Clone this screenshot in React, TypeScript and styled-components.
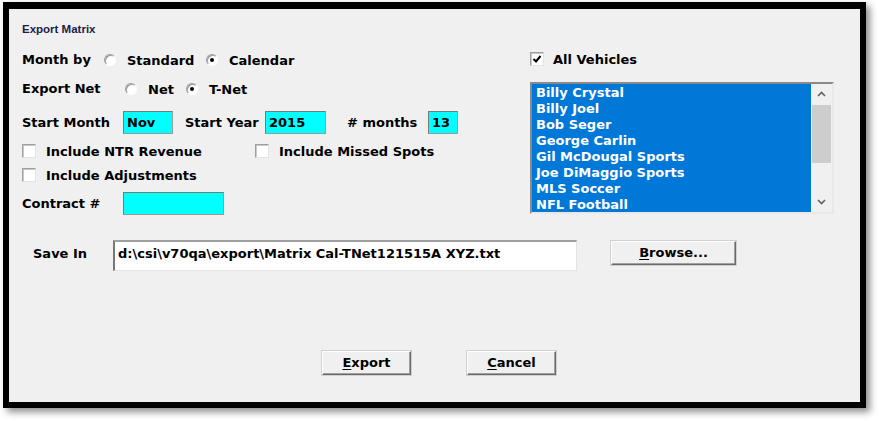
import React from "react";
import styled, { createGlobalStyle } from "styled-components";

const GlobalStyle = createGlobalStyle`
  html, body { margin: 0; padding: 0; background: #ffffff; }
  body { font-family: "DejaVu Sans", "Liberation Sans", sans-serif; }
  * { box-sizing: border-box; }
`;

const Page = styled.div`
  width: 879px;
  height: 421px;
  padding: 2px 0 0 3px;
  background: #ffffff;
`;

const Dialog = styled.div`
  width: 863px;
  height: 406px;
  border-style: solid;
  border-color: #000;
  border-width: 7px 6px 6px 6px;
  background: #f0f0f0;
  box-shadow: 4px 4px 7px rgba(0, 0, 0, 0.45);
  padding: 12px 0 0 13px;
  display: flex;
  flex-direction: column;
  font-family: "DejaVu Sans", "Liberation Sans", sans-serif;
  font-weight: bold;
  font-size: 13px;
  color: #000;
`;

const Top = styled.div`
  display: flex;
  align-items: flex-start;
`;

const LeftCol = styled.div`
  width: 508px;
  display: flex;
  flex-direction: column;
`;

const RightCol = styled.div`
  width: 304px;
  display: flex;
  flex-direction: column;
`;

const Title = styled.div`
  height: 16px;
  line-height: 16px;
  font-family: "Liberation Sans", Arial, sans-serif;
  font-size: 11.5px;
  font-weight: bold;
  color: #1c1c4c;
`;

const Row = styled.div<{ $top: number; $h: number }>`
  display: flex;
  align-items: center;
  margin-top: ${(p) => p.$top}px;
  height: ${(p) => p.$h}px;
  white-space: nowrap;
`;

const Label = styled.span<{ $w?: number; $ml?: number }>`
  display: inline-block;
  width: ${(p) => (p.$w ? `${p.$w}px` : "auto")};
  margin-left: ${(p) => p.$ml ?? 0}px;
  line-height: 16px;
`;

const Option = styled.span<{ $w?: number }>`
  display: inline-flex;
  align-items: center;
  width: ${(p) => (p.$w ? `${p.$w}px` : "auto")};
`;

const RadioCircle = styled.span<{ $on?: boolean }>`
  position: relative;
  display: inline-block;
  width: 12px;
  height: 12px;
  border-radius: 50%;
  border: 1px solid;
  border-color: #a0a0a0 #ffffff #ffffff #a0a0a0;
  background: #ffffff;
  box-shadow: inset 1px 1px 0 #9a9a9a;
  margin-right: 11px;
  &::after {
    content: "";
    display: ${(p) => (p.$on ? "block" : "none")};
    position: absolute;
    left: 3px;
    top: 3px;
    width: 4px;
    height: 4px;
    border-radius: 50%;
    background: #000;
  }
`;

const CheckBox = styled.span<{ $gap?: number }>`
  display: inline-flex;
  align-items: center;
  justify-content: center;
  width: 14px;
  height: 14px;
  border: 1px solid;
  border-color: #a0a0a0 #e3e3e3 #e3e3e3 #a0a0a0;
  background: #ffffff;
  box-shadow: inset 1px 1px 0 #c8c8c8;
  margin-right: ${(p) => p.$gap ?? 10}px;
`;

const CyanInput = styled.div<{ $w: number }>`
  width: ${(p) => p.$w}px;
  height: 23px;
  background: #00ffff;
  border: 1px solid;
  border-color: #7a7a7a #9a9a9a #9a9a9a #7a7a7a;
  padding: 0 0 0 3px;
  line-height: 21px;
`;

const ListBox = styled.div`
  margin-top: 13px;
  width: 304px;
  height: 132px;
  border: 2px solid;
  border-color: #8a8a8a #e8e8e8 #e8e8e8 #8a8a8a;
  display: flex;
  background: #0078d7;
`;

const Items = styled.div`
  flex: 1;
  display: flex;
  flex-direction: column;
  padding: 1px 0 0 4px;
  background: #0078d7;
`;

const Item = styled.div`
  height: 16px;
  line-height: 16px;
  color: #ffffff;
  white-space: nowrap;
`;

const ScrollBar = styled.div`
  width: 21px;
  background: #f0f0f0;
  display: flex;
  flex-direction: column;
`;

const ArrowBtn = styled.div`
  height: 20px;
  display: flex;
  align-items: center;
  justify-content: center;
`;

const Thumb = styled.div`
  margin: 1px 1px 0 1px;
  height: 58px;
  background: #cdcdcd;
`;

const Track = styled.div`
  flex: 1;
`;

const SaveRow = styled.div`
  display: flex;
  align-items: flex-start;
  margin-top: 25px;
`;

const SaveLabel = styled.span`
  width: 80px;
  margin-left: 11px;
  line-height: 16px;
  padding-top: 6px;
`;

const PathInput = styled.div`
  width: 464px;
  height: 31px;
  background: #ffffff;
  border-style: solid;
  border-width: 2px 1px 1px 2px;
  border-color: #a0a0a0 #e3e3e3 #e3e3e3 #787878;
  padding: 4px 0 0 3px;
  line-height: 16px;
  white-space: nowrap;
`;

const Button = styled.button<{ $w: number; $ml: number; $mt?: number }>`
  width: ${(p) => p.$w}px;
  height: 24px;
  margin-left: ${(p) => p.$ml}px;
  margin-top: ${(p) => p.$mt ?? 0}px;
  padding: 0;
  background: #f0f0f0;
  border: 1px solid;
  border-color: #ffffff #696969 #696969 #ffffff;
  box-shadow: inset -1px -1px 0 #a0a0a0;
  outline: 1px solid #d0d0d0;
  font-family: "DejaVu Sans", "Liberation Sans", sans-serif;
  font-weight: bold;
  font-size: 13px;
  color: #000;
  line-height: 20px;
  u { text-decoration: underline; text-underline-offset: 2px; }
`;

const ButtonRow = styled.div`
  display: flex;
  margin-top: 80px;
`;

const Chevron = ({ up }: { up?: boolean }) => (
  <svg width="9" height="6" viewBox="0 0 9 6">
    <polyline
      points={up ? "1,5 4.5,1.5 8,5" : "1,1 4.5,4.5 8,1"}
      fill="none"
      stroke="#606060"
      strokeWidth="1.6"
    />
  </svg>
);

const Check = () => (
  <svg width="10" height="10" viewBox="0 0 10 10">
    <polyline points="1.5,5 4,7.5 8.5,2" fill="none" stroke="#000" strokeWidth="2" />
  </svg>
);

const vehicles = [
  "Billy Crystal",
  "Billy Joel",
  "Bob Seger",
  "George Carlin",
  "Gil McDougal Sports",
  "Joe DiMaggio Sports",
  "MLS Soccer",
  "NFL Football",
];

export default function App() {
  return (
    <Page>
      <GlobalStyle />
      <Dialog>
        <Top>
          <LeftCol>
            <Title>Export Matrix</Title>
            <Row $top={13} $h={20}>
              <Label $w={82}>Month by</Label>
              <Option $w={102}>
                <RadioCircle />
                Standard
              </Option>
              <Option>
                <RadioCircle $on />
                Calendar
              </Option>
            </Row>
            <Row $top={9} $h={20}>
              <Label $w={103}>Export Net</Label>
              <Option $w={61}>
                <RadioCircle />
                Net
              </Option>
              <Option>
                <RadioCircle $on />
                T-Net
              </Option>
            </Row>
            <Row $top={12} $h={23}>
              <Label $w={101}>Start Month</Label>
              <CyanInput $w={50}>Nov</CyanInput>
              <Label $w={80} $ml={12}>Start Year</Label>
              <CyanInput $w={61}>2015</CyanInput>
              <Label $w={81} $ml={21}>
                # months
              </Label>
              <CyanInput $w={30}>13</CyanInput>
            </Row>
            <Row $top={7} $h={20}>
              <Option $w={233}>
                <CheckBox />
                Include NTR Revenue
              </Option>
              <Option>
                <CheckBox />
                Include Missed Spots
              </Option>
            </Row>
            <Row $top={4} $h={20}>
              <Option>
                <CheckBox />
                Include Adjustments
              </Option>
            </Row>
            <Row $top={7} $h={23}>
              <Label $w={101}>Contract #</Label>
              <CyanInput $w={101} />
            </Row>
          </LeftCol>
          <RightCol>
            <Row $top={28} $h={20}>
              <Option>
                <CheckBox $gap={9}>
                  <Check />
                </CheckBox>
                All Vehicles
              </Option>
            </Row>
            <ListBox>
              <Items>
                {vehicles.map((v) => (
                  <Item key={v}>{v}</Item>
                ))}
              </Items>
              <ScrollBar>
                <ArrowBtn>
                  <Chevron up />
                </ArrowBtn>
                <Thumb />
                <Track />
                <ArrowBtn>
                  <Chevron />
                </ArrowBtn>
              </ScrollBar>
            </ListBox>
          </RightCol>
        </Top>
        <SaveRow>
          <SaveLabel>Save In</SaveLabel>
          <PathInput>d:\csi\v70qa\export\Matrix Cal-TNet121515A XYZ.txt</PathInput>
          <Button $w={125} $ml={34} $mt={1}>
            <u>B</u>rowse...
          </Button>
        </SaveRow>
        <ButtonRow>
          <Button $w={89} $ml={300}>
            <u>E</u>xport
          </Button>
          <Button $w={89} $ml={56}>
            <u>C</u>ancel
          </Button>
        </ButtonRow>
      </Dialog>
    </Page>
  );
}
